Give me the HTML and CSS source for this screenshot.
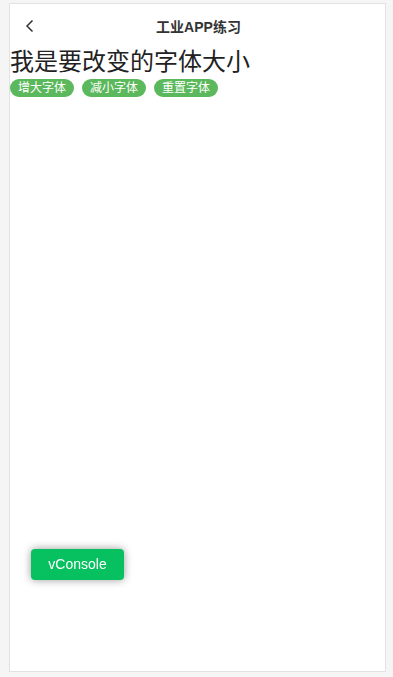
FILE: index.html
```html
<!DOCTYPE html>
<html lang="zh-CN">
<head>
    <meta charset="UTF-8">
    <meta name="viewport" content="width=device-width, initial-scale=1.0">
    <title>工业APP练习</title>
    <link rel="stylesheet" href="styles.css">
</head>
<body>
    <div class="page">
        <!-- Header -->
        <div class="header">
            <span class="back">
                <svg width="10" height="14" viewBox="0 0 10 14">
                    <path d="M7.5 1.5 L2 7 L7.5 12.5" fill="none" stroke="#333" stroke-width="1.5"/>
                </svg>
            </span>
            <h1 class="title">工业APP练习</h1>
        </div>

        <div class="content">
            <p class="sample" id="sample">我是要改变的字体大小</p>
            <div class="actions">
                <button class="btn">增大字体</button>
                <button class="btn">减小字体</button>
                <button class="btn">重置字体</button>
            </div>
        </div>
    </div>

    <div class="vc-switch">vConsole</div>
</body>
</html>
```

FILE: styles.css
```css
html,
body {
    margin: 0;
    padding: 0;
    height: 100%;
}

body {
    font-family: "Liberation Sans", "Noto Sans CJK SC", sans-serif;
    background-color: #f5f5f5;
    padding: 3px 7px 5px 9px;
    box-sizing: border-box;
}

.page {
    height: 100%;
    background-color: #fff;
    border: 1px solid #e2e2e2;
    box-sizing: border-box;
}

.header {
    height: 44px;
    display: flex;
    align-items: center;
    justify-content: center;
    position: relative;
}

.back {
    position: absolute;
    left: 15px;
    top: 15px;
    display: flex;
}

.title {
    margin: 0;
    font-size: 14px;
    font-weight: bold;
    color: #333;
    padding-left: 2px;
}

.content {
    padding: 0;
}

.sample {
    margin: 0;
    font-size: 24px;
    line-height: 32px;
    color: #222;
    margin-top: -2px;
}

.actions {
    display: flex;
    gap: 8px;
    margin-top: 1px;
}

.btn {
    font-family: inherit;
    font-size: 12px;
    line-height: 18px;
    height: 18px;
    padding: 0 8px;
    border: none;
    border-radius: 9px;
    background-color: #5cb85c;
    color: #fff;
}

.vc-switch {
    position: fixed;
    left: 31px;
    top: 549px;
    width: 93px;
    height: 31px;
    line-height: 31px;
    text-align: center;
    font-family: "Liberation Sans", sans-serif;
    font-size: 14px;
    color: #fff;
    background-color: #07c160;
    border-radius: 4px;
    box-shadow: 0 0 8px rgba(0, 0, 0, 0.4);
}
```
